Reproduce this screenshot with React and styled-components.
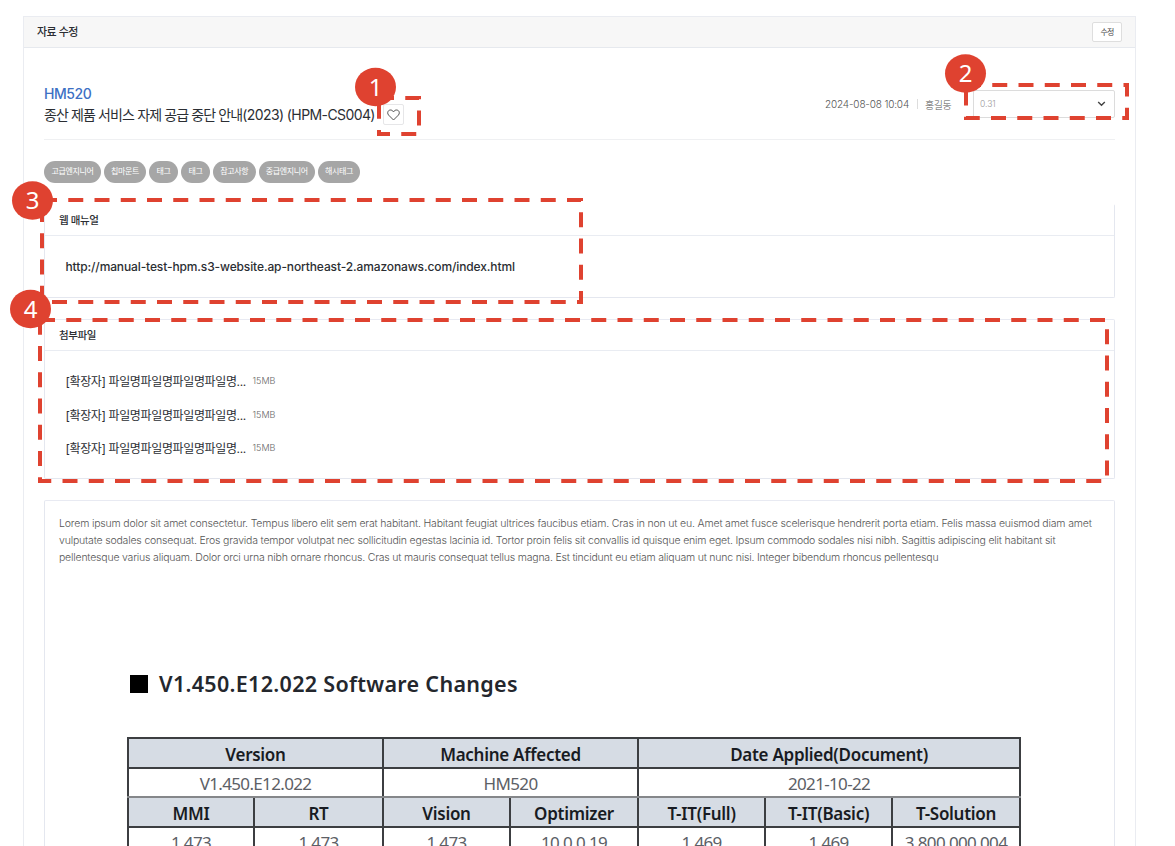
import React from "react";
import styled, { createGlobalStyle } from "styled-components";

const GlobalStyle = createGlobalStyle`
  * { box-sizing: border-box; }
  body {
    margin: 0;
    background: #fff;
    font-family: Inter, "Noto Sans CJK KR", sans-serif;
    color: #2b2e33;
  }
`;

const Page = styled.div`
  position: relative;
  width: 1175px;
  height: 846px;
  overflow: hidden;
  padding: 16px 39px 0 23px;
`;

const Panel = styled.main`
  height: 900px;
  border: 1px solid #eaecf1;
`;

const PanelHeader = styled.header`
  display: flex;
  align-items: center;
  justify-content: space-between;
  height: 31px;
  padding: 0 13px;
  background: #f7f7f7;
  border-bottom: 1px solid #e6e9ee;
`;

const PanelTitle = styled.h1`
  margin: 0 0 2px;
  font-size: 11px;
  font-weight: 500;
  letter-spacing: -0.5px;
`;

const EditButton = styled.button`
  width: 30px;
  height: 20px;
  padding: 0;
  border: 1px solid #dedede;
  border-radius: 2px;
  background: #fff;
  color: #444;
  font: 400 8px/16px Inter, "Noto Sans CJK KR", sans-serif;
  letter-spacing: -0.9px;
`;

const PanelBody = styled.div`
  padding: 35px 20px 0;
`;

const Heading = styled.section`
  display: flex;
  justify-content: space-between;
  height: 57px;
  border-bottom: 1px solid #eff0f2;
`;

const Model = styled.div`
  height: 21px;
  color: #3d70c4;
  font-size: 14px;
  line-height: 21px;
  font-weight: 500;
  letter-spacing: -0.45px;
`;

const TitleRow = styled.div`
  display: flex;
  align-items: center;
  gap: 7px;
  height: 21px;
`;

const Title = styled.h2`
  margin: 0;
  width: 332px;
  font-size: 14px;
  line-height: 20px;
  font-weight: 400;
  letter-spacing: -0.88px;
  white-space: nowrap;
`;

const TitleCode = styled.span`
  letter-spacing: -0.6px;
`;

const LikeButton = styled.button`
  display: grid;
  place-items: center;
  width: 21px;
  height: 21px;
  padding: 0;
  border: 1px solid #e6e6e8;
  border-radius: 2px;
  background: #fff;
`;

const Meta = styled.div`
  display: flex;
  align-items: center;
  height: 28px;
  margin-top: 7px;
  color: #555;
  font-size: 10px;
  font-weight: 300;
`;

const MetaDate = styled.span`
  width: 84px;
  letter-spacing: -0.15px;
  white-space: nowrap;
`;

const MetaDivider = styled.i`
  width: 1px;
  height: 10px;
  margin: 0 7px 0 8px;
  background: #ddd;
`;

const MetaAuthor = styled.span`
  width: 48px;
  letter-spacing: -0.4px;
`;

const VersionSelect = styled.div`
  display: flex;
  align-items: center;
  justify-content: space-between;
  width: 142px;
  height: 28px;
  padding: 0 8px 0 6px;
  border: 1px solid #dcdcdc;
  border-radius: 2px;
  color: #999;
  font-size: 8.5px;
`;

const Tags = styled.div`
  display: flex;
  gap: 3px;
  padding: 21px 0 21.5px;
`;

const Tag = styled.span`
  width: ${(p) => p.$width}px;
  height: 21.5px;
  border-radius: 11px;
  background: #a6a6a6;
  color: #fff;
  font-size: 8px;
  line-height: 20px;
  letter-spacing: -0.4px;
  text-align: center;
  white-space: nowrap;
`;

const Card = styled.section`
  height: ${(p) => p.$height}px;
  margin-bottom: ${(p) => p.$gap || 0}px;
  border: 1px solid #e4e7ef;
  border-top-color: ${(p) => (p.$openTop ? "transparent" : "#e8eaf2")};
  border-radius: 2px;
`;

const CardTitle = styled.h3`
  height: 31px;
  margin: 0;
  padding-left: 14px;
  border-bottom: 1px solid #e9ecf2;
  font-size: 10.5px;
  line-height: 32px;
  font-weight: 500;
  letter-spacing: -0.4px;
`;

const ManualLink = styled.a`
  display: block;
  padding: 21px 0 0 20.5px;
  font-size: 12px;
  line-height: 20px;
  font-weight: 500;
  letter-spacing: -0.12px;
`;

const FileList = styled.ul`
  display: grid;
  grid-auto-rows: 33.4px;
  margin: 0;
  padding: 13px 0 0 20.5px;
  list-style: none;
`;

const FileRow = styled.li`
  display: flex;
  align-items: center;
  font-size: 12px;
`;

const FileName = styled.span`
  width: 187px;
  letter-spacing: -0.37px;
  white-space: nowrap;
`;

const FileSize = styled.span`
  color: #666;
  font-size: 9px;
  font-weight: 300;
`;

const Paragraph = styled.p`
  margin: 0;
  padding: 14px 0 0 14px;
  color: #555;
  font-size: 10.5px;
  line-height: 17px;
  font-weight: 300;
  white-space: nowrap;
`;

const TextLine = styled.span`
  display: block;
  letter-spacing: ${(p) => p.$spacing}px;
`;

const Document = styled.div`
  padding: 100px 0 0 83px;
  font-family: "Noto Sans", "Open Sans", sans-serif;
  color: #191c22;
`;

const DocumentTitle = styled.h4`
  display: flex;
  align-items: center;
  gap: 11px;
  height: 34px;
  margin: 0 0 37px 2px;
  color: #24272d;
  font-size: 21.5px;
  font-weight: 600;
  letter-spacing: 0.31px;
  white-space: nowrap;
`;

const Bullet = styled.i`
  width: 18px;
  height: 18px;
  margin-top: 1px;
  background: #000;
`;

const ChangeTable = styled.table`
  width: 892px;
  margin-left: -1px;
  table-layout: fixed;
  border-collapse: collapse;
  border: 2px solid #3c3e41;
  border-top-color: #77797c;
  font-size: 17px;
  line-height: 20px;
`;

const Cell = styled.td`
  height: ${(p) => p.$height}px;
  padding: ${(p) => (p.$head ? "3px" : "2px")} 0 0;
  border: 2px solid #3c3e41;
  border-top-color: ${(p) => (p.$softTop ? "#85878a" : "#3c3e41")};
  border-bottom-color: ${(p) => (p.$softBottom ? "#85878a" : "#3c3e41")};
  background: ${(p) => (p.$head ? "#d6dce4" : "#fff")};
  color: ${(p) => (p.$head ? "#181b22" : "#5c6066")};
  font-weight: ${(p) => (p.$head ? 600 : 400)};
  letter-spacing: ${(p) => (p.$head ? -0.28 : -0.65)}px;
  text-align: center;
  white-space: nowrap;
`;

const Callouts = styled.svg`
  position: absolute;
  inset: 0;
  pointer-events: none;
`;

const Outline = styled.rect`
  fill: none;
  stroke: #df4230;
  stroke-width: 4;
  stroke-dasharray: 15 11.25;
`;

const Marker = styled.ellipse`
  fill: #df4230;
`;

const MarkerLabel = styled.text`
  fill: #fff;
  font: 400 24px "Noto Sans", sans-serif;
  text-anchor: middle;
`;

const tags = [
  ["고급엔지니어", 57],
  ["칩마운트", 42],
  ["태그", 29],
  ["태그", 29],
  ["참고사항", 42.5],
  ["중급엔지니어", 56.5],
  ["해시태그", 42],
];

const callouts = [
  { n: 1, cx: 375.5, cy: 87, x: 379, y: 98, w: 40, h: 36 },
  { n: 2, cx: 965.5, cy: 73.5, x: 966, y: 85, w: 161, h: 33 },
  { n: 3, cx: 32.5, cy: 200.5, x: 42, y: 200, w: 539, h: 102 },
  { n: 4, cx: 30.5, cy: 309, x: 40, y: 320, w: 1067, h: 161 },
];

const lines = [
  ["Lorem ipsum dolor sit amet consectetur. Tempus libero elit sem erat habitant. Habitant feugiat ultrices faucibus etiam. Cras in non ut eu. Amet amet fusce scelerisque hendrerit porta etiam. Felis massa euismod diam amet", -0.173],
  ["vulputate sodales consequat. Eros gravida tempor volutpat nec sollicitudin egestas lacinia id. Tortor proin felis sit convallis id quisque enim eget. Ipsum commodo sodales nisi nibh. Sagittis adipiscing elit habitant sit", -0.183],
  ["pellentesque varius aliquam. Dolor orci urna nibh ornare rhoncus. Cras ut mauris consequat tellus magna. Est tincidunt eu etiam aliquam ut nunc nisi. Integer bibendum rhoncus pellentesqu", -0.2],
];

const columns = [126, 129, 127, 128, 127, 127, 128];

export default function App() {
  return (
    <Page>
      <GlobalStyle />
      <Panel>
        <PanelHeader>
          <PanelTitle>자료 수정</PanelTitle>
          <EditButton>수정</EditButton>
        </PanelHeader>
        <PanelBody>
          <Heading>
            <div>
              <Model>HM520</Model>
              <TitleRow>
                <Title>
                  종산 제품 서비스 자제 공급 중단 안내<TitleCode>(2023) (HPM-CS004)</TitleCode>
                </Title>
                <LikeButton aria-label="좋아요">
                  <svg width="13" height="12" viewBox="0 0 13 12" fill="none" stroke="#555" strokeWidth="1">
                    <path d="M6.5 11 L1.6 6.1 C0.3 4.7 0.5 2.7 1.6 1.7 C2.9 0.6 4.8 0.8 5.8 2 L6.5 2.8 L7.2 2 C8.2 0.8 10.1 0.6 11.4 1.7 C12.5 2.7 12.7 4.7 11.4 6.1 Z" />
                  </svg>
                </LikeButton>
              </TitleRow>
            </div>
            <Meta>
              <MetaDate>2024-08-08 10:04</MetaDate>
              <MetaDivider />
              <MetaAuthor>홍길동</MetaAuthor>
              <VersionSelect>
                0.31
                <svg width="9" height="6" viewBox="0 0 9 6" fill="none" stroke="#444" strokeWidth="1.4">
                  <path d="M1.2 1 L4.5 4.3 L7.8 1" />
                </svg>
              </VersionSelect>
            </Meta>
          </Heading>
          <Tags>
            {tags.map(([label, width], i) => (
              <Tag key={i} $width={width}>{label}</Tag>
            ))}
          </Tags>
          <Card $height={94} $gap={21} $openTop>
            <CardTitle>웹 매뉴얼</CardTitle>
            <ManualLink>http://manual-test-hpm.s3-website.ap-northeast-2.amazonaws.com/index.html</ManualLink>
          </Card>
          <Card $height={160} $gap={21}>
            <CardTitle>첨부파일</CardTitle>
            <FileList>
              {[1, 2, 3].map((n) => (
                <FileRow key={n}>
                  <FileName>[확장자] 파일명파일명파일명파일명...</FileName>
                  <FileSize>15MB</FileSize>
                </FileRow>
              ))}
            </FileList>
          </Card>
          <Card $height={400}>
            <Paragraph>
              {lines.map(([text, spacing]) => (
                <TextLine key={text} $spacing={spacing}>{text}</TextLine>
              ))}
            </Paragraph>
            <Document>
              <DocumentTitle>
                <Bullet />
                V1.450.E12.022 Software Changes
              </DocumentTitle>
              <ChangeTable>
                <colgroup>
                  {columns.map((w, i) => <col key={i} width={w} />)}
                </colgroup>
                <tbody>
                  <tr>
                    <Cell $head $height={30} colSpan={2}>Version</Cell>
                    <Cell $head $height={30} colSpan={2}>Machine Affected</Cell>
                    <Cell $head $height={30} colSpan={3}>Date Applied(Document)</Cell>
                  </tr>
                  <tr>
                    <Cell $height={29} $softBottom colSpan={2}>V1.450.E12.022</Cell>
                    <Cell $height={29} $softBottom colSpan={2}>HM520</Cell>
                    <Cell $height={29} $softBottom colSpan={3}>2021-10-22</Cell>
                  </tr>
                  <tr>
                    {["MMI", "RT", "Vision", "Optimizer", "T-IT(Full)", "T-IT(Basic)", "T-Solution"].map((t) => (
                      <Cell key={t} $head $softTop $height={30}>{t}</Cell>
                    ))}
                  </tr>
                  <tr>
                    {["1.473", "1.473", "1.473", "10.0.0.19", "1.469", "1.469", "3.800.000.004"].map((t, i) => (
                      <Cell key={i} $height={30}>{t}</Cell>
                    ))}
                  </tr>
                </tbody>
              </ChangeTable>
            </Document>
          </Card>
        </PanelBody>
      </Panel>
      <Callouts width="1175" height="846">
        {callouts.map((c) => (
          <g key={c.n}>
            <Outline x={c.x} y={c.y} width={c.w} height={c.h} />
            <Marker cx={c.cx} cy={c.cy} rx="20.5" ry="19.3" />
            <MarkerLabel x={c.cx} y={c.cy + 8.5}>{c.n}</MarkerLabel>
          </g>
        ))}
      </Callouts>
    </Page>
  );
}
